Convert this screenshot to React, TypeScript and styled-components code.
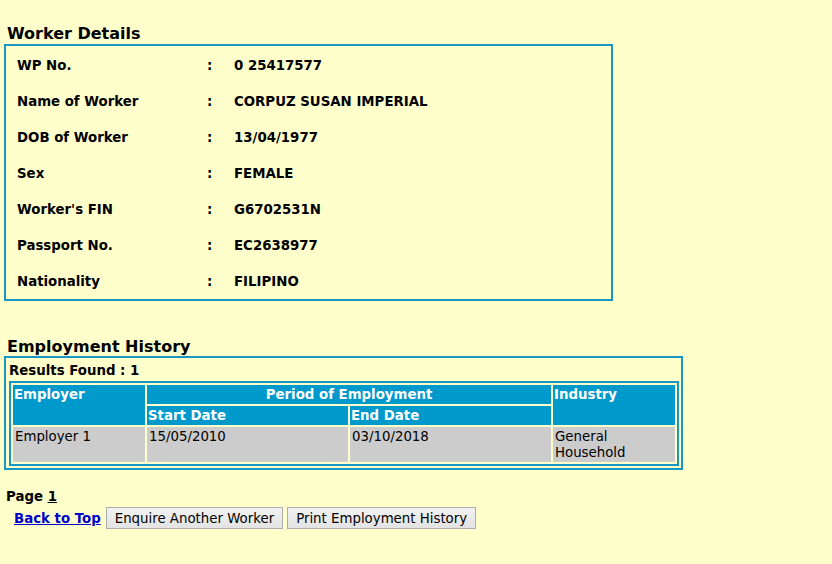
import React from "react";
import styled, { createGlobalStyle } from "styled-components";

const GlobalStyle = createGlobalStyle`
  html, body {
    margin: 0;
    padding: 0;
    background: #ffffcc;
  }
  body {
    font-family: "DejaVu Sans", Verdana, sans-serif;
    font-size: 13.33px;
    color: #000;
  }
`;

const Page = styled.div`
  padding: 24px 0 0 4px;
`;

const SectionTitle = styled.h2<{ $gap?: number }>`
  margin: 0 0 ${(p) => (p.$gap ?? 1)}px 3px;
  font-size: 16px;
  line-height: 19px;
  font-weight: bold;
`;

const DetailsBox = styled.div`
  box-sizing: border-box;
  width: 609px;
  height: 257px;
  border: 2px solid #1a96c4;
  padding: 2px 0 0 11px;
  display: grid;
  grid-template-columns: 190px 27px 1fr;
  grid-auto-rows: 36px;
  align-items: center;
  font-weight: bold;
`;

const Cell = styled.div`
  line-height: 16px;
`;

const HistorySection = styled.section`
  margin-top: 36px;
`;

const HistoryBox = styled.div`
  box-sizing: border-box;
  width: 679px;
  border: 2px solid #1a96c4;
  padding: 5px 2px 2px 3px;
`;

const ResultsLine = styled.div`
  font-weight: bold;
  line-height: 16px;
  margin-bottom: 2px;
`;

const Table = styled.table`
  border: 2px solid #1a96c4;
  border-spacing: 2px;
  table-layout: fixed;
  width: 670px;
`;

const Th = styled.th<{ $align?: string }>`
  background: #0099cc;
  color: #fff;
  font-weight: bold;
  text-align: ${(p) => p.$align || "left"};
  vertical-align: top;
  padding: 2px 1px 1px 1px;
  line-height: 16px;
`;

const Td = styled.td`
  background: #cccccc;
  vertical-align: top;
  padding: 2px 1px 1px 2px;
  line-height: 16px;
  height: 30px;
`;

const Footer = styled.div`
  margin-top: 19px;
  padding-left: 2px;
`;

const PageLine = styled.div`
  font-weight: bold;
  line-height: 16px;
  a {
    color: #000;
  }
`;

const Actions = styled.div`
  display: flex;
  align-items: center;
  gap: 4px;
  margin-top: 2px;
  padding-left: 8px;
`;

const TopLink = styled.a`
  color: #0000cc;
  font-weight: bold;
  text-decoration: underline;
  margin-right: 1px;
`;

const Button = styled.button`
  font-family: "DejaVu Sans", Verdana, sans-serif;
  font-size: 13.33px;
  height: 22px;
  padding: 0 8px;
  border: 1px solid #adadad;
  border-radius: 0;
  background: linear-gradient(#f2f2f2, #e3e3e3);
  color: #000;
`;

const details: [string, string][] = [
  ["WP No.", "0 25417577"],
  ["Name of Worker", "CORPUZ SUSAN IMPERIAL"],
  ["DOB of Worker", "13/04/1977"],
  ["Sex", "FEMALE"],
  ["Worker's FIN", "G6702531N"],
  ["Passport No.", "EC2638977"],
  ["Nationality", "FILIPINO"],
];

const App: React.FC = () => {
  return (
    <>
      <GlobalStyle />
      <Page>
        <SectionTitle>Worker Details</SectionTitle>
        <DetailsBox>
          {details.map(([label, value]) => (
            <React.Fragment key={label}>
              <Cell>{label}</Cell>
              <Cell>:</Cell>
              <Cell>{value}</Cell>
            </React.Fragment>
          ))}
        </DetailsBox>

        <HistorySection>
          <SectionTitle $gap={0}>Employment History</SectionTitle>
          <HistoryBox>
            <ResultsLine>Results Found : 1</ResultsLine>
            <Table>
              <colgroup>
                <col style={{ width: 132 }} />
                <col style={{ width: 201 }} />
                <col style={{ width: 201 }} />
                <col />
              </colgroup>
              <thead>
                <tr>
                  <Th rowSpan={2}>Employer</Th>
                  <Th colSpan={2} $align="center">
                    Period of Employment
                  </Th>
                  <Th rowSpan={2}>Industry</Th>
                </tr>
                <tr>
                  <Th>Start Date</Th>
                  <Th>End Date</Th>
                </tr>
              </thead>
              <tbody>
                <tr>
                  <Td>Employer 1</Td>
                  <Td>15/05/2010</Td>
                  <Td>03/10/2018</Td>
                  <Td>General Household</Td>
                </tr>
              </tbody>
            </Table>
          </HistoryBox>
        </HistorySection>

        <Footer>
          <PageLine>
            Page <a href="#">1</a>
          </PageLine>
          <Actions>
            <TopLink href="#">Back to Top</TopLink>
            <Button>Enquire Another Worker</Button>
            <Button>Print Employment History</Button>
          </Actions>
        </Footer>
      </Page>
    </>
  );
};

export default App;
